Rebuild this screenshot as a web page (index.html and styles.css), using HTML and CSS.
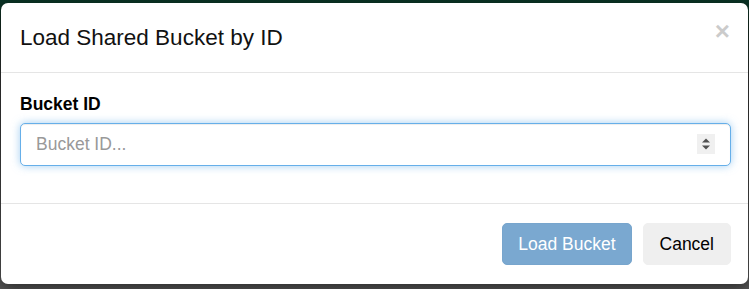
FILE: index.html
```html
<!DOCTYPE html>
<html>
<head>
<meta charset="utf-8">
<link rel="stylesheet" href="styles.css">
</head>
<body>
<div class="modal">
  <div class="modal-header">
    <h4 class="modal-title">Load Shared Bucket by ID</h4>
    <button class="close" type="button">×</button>
  </div>
  <div class="modal-body">
    <div class="form-group">
      <label class="label" for="bid">Bucket ID</label>
      <div class="input-wrap">
        <input id="bid" class="form-control" type="text" placeholder="Bucket ID...">
        <span class="spinner">
          <svg width="10" height="14" viewBox="0 0 10 14"><path d="M1 5.5 L5 1.5 L9 5.5 Z M1 8.5 L5 12.5 L9 8.5 Z" fill="#505050"/></svg>
        </span>
      </div>
    </div>
  </div>
  <div class="modal-footer">
    <button class="btn btn-primary" type="button">Load Bucket</button>
    <button class="btn btn-default" type="button">Cancel</button>
  </div>
</div>
</body>
</html>
```

FILE: styles.css
```css
html, body {
  height: 100%;
}
body {
  margin: 0;
  padding: 3px 0 0 1px;
  box-sizing: border-box;
  background: linear-gradient(to bottom, #093325 0px, #16291f 30px, #333333 80px, #474747 200px, #595959 289px);
  font-family: "Liberation Sans", Arial, Helvetica, sans-serif;
  font-size: 17.5px;
  line-height: 1.42857;
  color: #000;
  overflow: hidden;
}
.modal {
  width: 747px;
  background: #fff;
  border-radius: 7px;
  box-shadow: 0 5px 15px rgba(0, 0, 0, 0.5);
}
.modal-header {
  display: flex;
  align-items: flex-start;
  justify-content: space-between;
  padding: 18.5px 18px 18.5px 19px;
  border-bottom: 1px solid #e5e5e5;
}
.modal-title {
  margin: 0;
  font-size: 22.5px;
  font-weight: normal;
  line-height: 32px;
  color: #111;
}
.close {
  margin: -4px 0 0 0;
  padding: 0;
  border: 0;
  background: transparent;
  font-family: "Liberation Sans", Arial, sans-serif;
  font-size: 26px;
  font-weight: bold;
  line-height: 1;
  color: #000;
  opacity: 0.2;
}
.modal-body {
  padding: 18.75px 17px 18.75px 19px;
}
.form-group {
  margin-bottom: 18.75px;
}
.label {
  display: block;
  font-weight: bold;
  margin-bottom: 6.25px;
  line-height: 25px;
}
.input-wrap {
  position: relative;
}
.form-control {
  display: block;
  box-sizing: border-box;
  width: 100%;
  height: 42.5px;
  padding: 7.5px 15px;
  font-family: inherit;
  font-size: 17.5px;
  color: #555;
  background: #fff;
  border: 1.25px solid #66afe9;
  border-radius: 5px;
  outline: 0;
  box-shadow: inset 0 1px 1px rgba(0, 0, 0, 0.075), 0 0 8px rgba(102, 175, 233, 0.6);
}
.form-control::placeholder {
  color: #999;
}
.spinner {
  position: absolute;
  right: 16px;
  top: 11px;
  width: 18px;
  height: 20px;
  background: #f0f0f0;
  display: flex;
  align-items: center;
  justify-content: center;
}
.modal-footer {
  display: flex;
  justify-content: flex-end;
  gap: 11px;
  padding: 18.75px 17px 18.75px 19px;
  border-top: 1px solid #e5e5e5;
}
.btn {
  box-sizing: border-box;
  height: 42.5px;
  padding: 7.5px 15px;
  font-family: inherit;
  font-size: 17.5px;
  line-height: 25px;
  border-radius: 5px;
  border: 1.25px solid transparent;
}
.btn-primary {
  background: #7aa8d0;
  border-color: #77a5cd;
  color: #fff;
}
.btn-default {
  background: #efefef;
  border-color: #efefef;
  color: #000;
  padding: 7.5px 16px;
}
```
